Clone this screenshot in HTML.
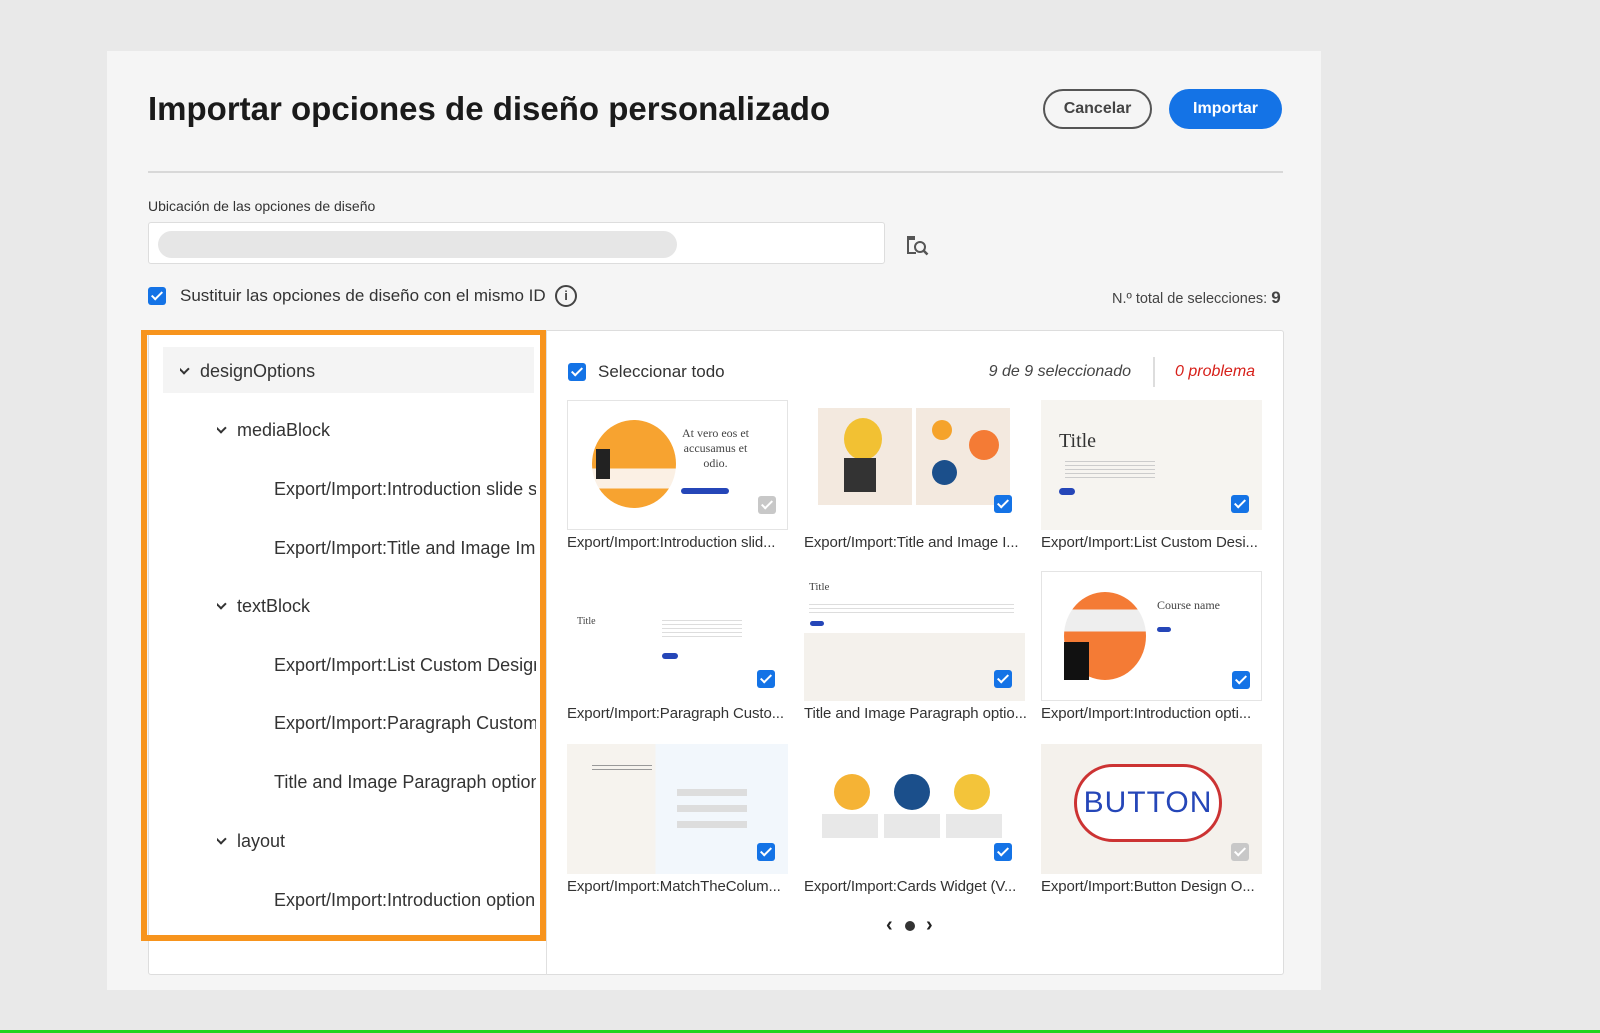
<!DOCTYPE html>
<html><head><meta charset="utf-8"><style>
*{box-sizing:border-box;margin:0;padding:0}
body{width:1600px;height:1033px;background:#e9e9e9;font-family:"Liberation Sans",sans-serif;color:#2c2c2c;position:relative;overflow:hidden}
.a{position:absolute}
.panel{left:107px;top:51px;width:1214px;height:939px;background:#f5f5f5}
.title{left:148px;top:90px;font-size:33px;font-weight:bold;color:#1a1a1a;letter-spacing:0px}
.btn{top:89px;height:40px;border-radius:20px;font-size:16px;font-weight:bold;text-align:center;line-height:36px}
.cb{width:18px;height:18px;background:#1473e6;border-radius:3px}
.cb:after{content:"";position:absolute;left:6px;top:2px;width:4px;height:9px;border:solid #fff;border-width:0 2.5px 2.5px 0;transform:rotate(45deg)}
.cbg{background:#c8c8c8}
.tree{font-size:18px;color:#333;white-space:nowrap;overflow:hidden}
.chev{display:inline-block;width:8px;height:8px;border:solid #333;border-width:0 2.5px 2.5px 0;transform:rotate(45deg);margin-right:12px;position:relative;top:-4px}
.thumb{width:221px;height:130px;background:#fff;overflow:hidden}
.lbl{font-size:15px;color:#333;white-space:nowrap;letter-spacing:-0.1px}
</style></head><body>
<div class="a panel"></div>
<div class="a title">Importar opciones de diseño personalizado</div>
<div class="a btn" style="left:1043px;width:109px;border:2px solid #555;color:#444">Cancelar</div>
<div class="a btn" style="left:1169px;width:113px;background:#1473e6;color:#fff;line-height:40px">Importar</div>
<div class="a" style="left:148px;top:171px;width:1135px;height:2px;background:#d8d8d8"></div>
<div class="a" style="left:148px;top:198px;font-size:14px;color:#333">Ubicación de las opciones de diseño</div>
<div class="a" style="left:148px;top:222px;width:737px;height:42px;background:#fff;border:1px solid #ddd;border-radius:3px"></div>
<div class="a" style="left:158px;top:231px;width:519px;height:27px;background:#e6e6e6;border-radius:14px"></div>
<svg class="a" style="left:906px;top:234px" width="24" height="24" viewBox="0 0 24 24"><path d="M2 5h6v-2h-6zM2 5v14h8" fill="none" stroke="#555" stroke-width="2"/><circle cx="14" cy="13" r="5" fill="none" stroke="#555" stroke-width="2"/><path d="M17.5 16.5l4 4" stroke="#555" stroke-width="2.5"/></svg>
<div class="a cb" style="left:148px;top:287px"></div>
<div class="a" style="left:180px;top:286px;font-size:17px;color:#333">Sustituir las opciones de diseño con el mismo ID</div>
<div class="a" style="left:555px;top:285px;width:22px;height:22px;border:2px solid #444;border-radius:50%;font-size:13px;text-align:center;line-height:18px;font-weight:bold;color:#444">i</div>
<div class="a" style="left:1112px;top:288px;font-size:14.5px;color:#444">N.º total de selecciones: <b style="font-size:17px">9</b></div>
<div class="a" style="left:148px;top:330px;width:1136px;height:645px;background:#fff;border:1px solid #ddd;border-radius:3px"></div>
<div class="a" style="left:546px;top:330px;width:1px;height:645px;background:#e0e0e0"></div>
<div class="a" style="left:141px;top:330px;width:405px;height:611px;border:6px solid #f7941d;border-top-width:5px"></div>
<div class="a" style="left:163px;top:347px;width:371px;height:46px;background:#f4f4f4"></div>
<div class="a tree" style="left:180px;top:361px"><span class="chev"></span>designOptions</div>
<div class="a tree" style="left:217px;top:420px"><span class="chev"></span>mediaBlock</div>
<div class="a tree" style="left:274px;top:479px;width:262px">Export/Import:Introduction slide si</div>
<div class="a tree" style="left:274px;top:538px;width:262px">Export/Import:Title and Image Ima</div>
<div class="a tree" style="left:217px;top:596px"><span class="chev"></span>textBlock</div>
<div class="a tree" style="left:274px;top:655px;width:262px">Export/Import:List Custom Design</div>
<div class="a tree" style="left:274px;top:713px;width:262px">Export/Import:Paragraph Custom I</div>
<div class="a tree" style="left:274px;top:772px;width:262px">Title and Image Paragraph option 1</div>
<div class="a tree" style="left:217px;top:831px"><span class="chev"></span>layout</div>
<div class="a tree" style="left:274px;top:890px;width:262px">Export/Import:Introduction option</div>
<div class="a cb" style="left:568px;top:363px"></div>
<div class="a" style="left:598px;top:362px;font-size:17px;color:#333">Seleccionar todo</div>
<div class="a" style="left:980px;top:363px;font-size:16px;font-style:italic;color:#444;width:151px;text-align:right">9 de 9 seleccionado</div>
<div class="a" style="left:1153px;top:357px;width:2px;height:30px;background:#ddd"></div>
<div class="a" style="left:1175px;top:363px;font-size:16px;font-style:italic;color:#d7201a">0 problema</div>

<!-- row1 -->
<div class="a thumb" style="left:567px;top:400px;border:1px solid #e4e4e4">
 <div class="a" style="left:24px;top:19px;width:84px;height:88px;border-radius:50%;background:linear-gradient(#f7a330 0 55%,#fbf0e4 55% 78%,#f7a330 78%)"></div>
 <div class="a" style="left:28px;top:48px;width:14px;height:30px;background:#222"></div>
 <div class="a" style="left:110px;top:25px;font:12px 'Liberation Serif',serif;color:#444;text-align:center;width:75px">At vero eos et accusamus et odio.</div>
 <div class="a" style="left:113px;top:87px;width:48px;height:6px;background:#2546b8;border-radius:3px"></div>
 <div class="a cb cbg" style="left:190px;top:95px"></div>
</div>
<div class="a thumb" style="left:804px;top:400px;background:#fff">
 <div class="a" style="left:14px;top:8px;width:94px;height:97px;background:#f3e9df"></div>
 <div class="a" style="left:112px;top:8px;width:94px;height:97px;background:#f3e9df"></div>
 <div class="a" style="left:40px;top:18px;width:38px;height:42px;border-radius:50%;background:#f2c133"></div>
 <div class="a" style="left:40px;top:58px;width:32px;height:34px;background:#333"></div>
 <div class="a" style="left:128px;top:20px;width:20px;height:20px;border-radius:50%;background:#f5a32b"></div>
 <div class="a" style="left:165px;top:30px;width:30px;height:30px;border-radius:50%;background:#f47b35"></div>
 <div class="a" style="left:128px;top:60px;width:25px;height:25px;border-radius:50%;background:#1b4f8b"></div>
 <div class="a cb" style="left:190px;top:95px"></div>
</div>
<div class="a thumb" style="left:1041px;top:400px;background:#f6f4f0">
 <div class="a" style="left:18px;top:30px;font:20px 'Liberation Serif',serif;color:#333">Title</div>
 <div class="a" style="left:24px;top:58px;width:90px;height:20px;background:repeating-linear-gradient(#fff0 0 3px,#ccc 3px 4px)"></div>
 <div class="a" style="left:18px;top:88px;width:16px;height:7px;background:#2546b8;border-radius:4px"></div>
 <div class="a cb" style="left:190px;top:95px"></div>
</div>
<div class="a lbl" style="left:567px;top:534px">Export/Import:Introduction slid...</div>
<div class="a lbl" style="left:804px;top:534px">Export/Import:Title and Image I...</div>
<div class="a lbl" style="left:1041px;top:534px">Export/Import:List Custom Desi...</div>
<!-- row2 -->
<div class="a thumb" style="left:567px;top:571px">
 <div class="a" style="left:10px;top:45px;font:10px 'Liberation Serif',serif;color:#444">Title</div>
 <div class="a" style="left:95px;top:46px;width:80px;height:22px;background:repeating-linear-gradient(#fff0 0 3px,#ddd 3px 4px)"></div>
 <div class="a" style="left:95px;top:82px;width:16px;height:6px;background:#2546b8;border-radius:3px"></div>
 <div class="a cb" style="left:190px;top:99px"></div>
</div>
<div class="a thumb" style="left:804px;top:571px">
 <div class="a" style="left:5px;top:10px;font:11px 'Liberation Serif',serif;color:#444">Title</div>
 <div class="a" style="left:5px;top:30px;width:205px;height:12px;background:repeating-linear-gradient(#fff0 0 3px,#ddd 3px 4px)"></div>
 <div class="a" style="left:6px;top:50px;width:14px;height:5px;background:#2546b8;border-radius:3px"></div>
 <div class="a" style="left:0;top:62px;width:221px;height:68px;background:#f4f1ec"></div>
 <div class="a cb" style="left:190px;top:99px"></div>
</div>
<div class="a thumb" style="left:1041px;top:571px;border:1px solid #e4e4e4">
 <div class="a" style="left:22px;top:20px;width:82px;height:88px;border-radius:50%;background:linear-gradient(#f47b35 0 20%,#eee 20% 45%,#f47b35 45%)"></div>
 <div class="a" style="left:22px;top:70px;width:25px;height:38px;background:#111"></div>
 <div class="a" style="left:115px;top:26px;font:12px 'Liberation Serif',serif;color:#444">Course name</div>
 <div class="a" style="left:115px;top:55px;width:14px;height:5px;background:#2546b8;border-radius:3px"></div>
 <div class="a cb" style="left:190px;top:99px"></div>
</div>
<div class="a lbl" style="left:567px;top:705px">Export/Import:Paragraph Custo...</div>
<div class="a lbl" style="left:804px;top:705px">Title and Image Paragraph optio...</div>
<div class="a lbl" style="left:1041px;top:705px">Export/Import:Introduction opti...</div>
<!-- row3 -->
<div class="a thumb" style="left:567px;top:744px;background:linear-gradient(90deg,#f6f3ee 0 40%,#f2f7fc 40%)">
 <div class="a" style="left:25px;top:18px;width:60px;height:10px;background:repeating-linear-gradient(#fff0 0 3px,#999 3px 4px)"></div>
 <div class="a" style="left:110px;top:45px;width:70px;height:40px;background:repeating-linear-gradient(#ddd 0 7px,#fff0 7px 16px)"></div>
 <div class="a cb" style="left:190px;top:99px"></div>
</div>
<div class="a thumb" style="left:804px;top:744px">
 <div class="a" style="left:30px;top:30px;width:36px;height:36px;border-radius:50%;background:#f5b335"></div>
 <div class="a" style="left:90px;top:30px;width:36px;height:36px;border-radius:50%;background:#1b4f8b"></div>
 <div class="a" style="left:150px;top:30px;width:36px;height:36px;border-radius:50%;background:#f3c43a"></div>
 <div class="a" style="left:18px;top:70px;width:180px;height:24px;background:repeating-linear-gradient(90deg,#e8e8e8 0 56px,#fff0 56px 62px)"></div>
 <div class="a cb" style="left:190px;top:99px"></div>
</div>
<div class="a thumb" style="left:1041px;top:744px;background:#f4f1ec">
 <div class="a" style="left:33px;top:20px;width:148px;height:78px;border:3px solid #c33;border-radius:40px;background:#fff;font-size:30px;color:#2546b8;text-align:center;line-height:72px;letter-spacing:1px">BUTTON</div>
 <div class="a cb cbg" style="left:190px;top:99px"></div>
</div>
<div class="a lbl" style="left:567px;top:878px">Export/Import:MatchTheColum...</div>
<div class="a lbl" style="left:804px;top:878px">Export/Import:Cards Widget (V...</div>
<div class="a lbl" style="left:1041px;top:878px">Export/Import:Button Design O...</div>
<div class="a" style="left:886px;top:914px;font-size:20px;font-weight:bold;color:#222">‹</div>
<div class="a" style="left:905px;top:921px;width:10px;height:10px;border-radius:50%;background:#333"></div>
<div class="a" style="left:926px;top:914px;font-size:20px;font-weight:bold;color:#222">›</div>
<div class="a" style="left:0;top:1030px;width:1600px;height:3px;background:#22d31e"></div>
</body></html>
